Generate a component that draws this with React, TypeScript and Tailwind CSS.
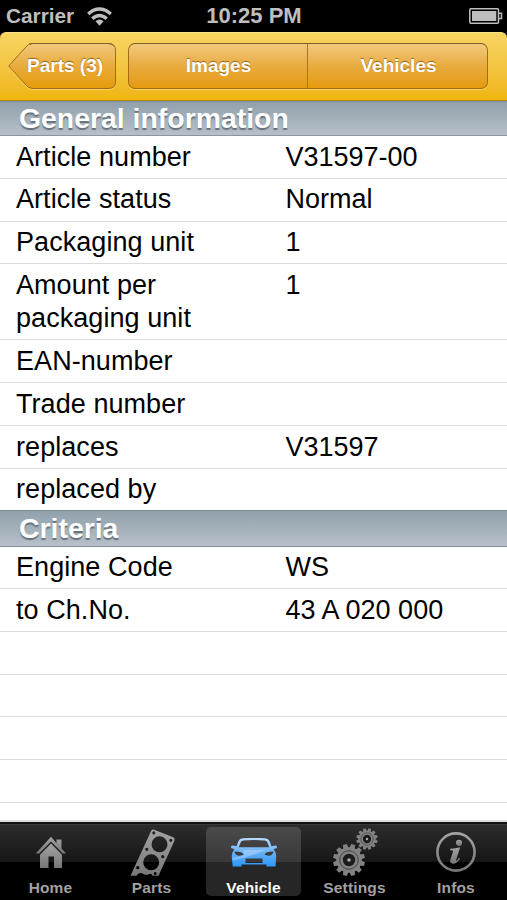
import type { ReactNode } from "react";

type Row = { label: ReactNode; value?: string; height: string };

const general: Row[] = [
  { label: "Article number", value: "V31597-00", height: "h-[43px] pt-[5px]" },
  { label: "Article status", value: "Normal", height: "h-[43px] pt-1" },
  { label: "Packaging unit", value: "1", height: "h-[42px] pt-1" },
  { label: <>Amount per<br />packaging unit</>, value: "1", height: "h-[76px] pt-[5px]" },
  { label: "EAN-number", height: "h-[43px] pt-[5px]" },
  { label: "Trade number", height: "h-[43px] pt-[5px]" },
  { label: "replaces", value: "V31597", height: "h-[43px] pt-[5px]" },
  { label: "replaced by", height: "h-[41px] border-b-0 pt-1" },
];

const criteria: Row[] = [
  { label: "Engine Code", value: "WS", height: "h-[42px] pt-1" },
  { label: "to Ch.No.", value: "43 A 020 000", height: "h-[43px] pt-[5px]" },
  { label: "", height: "h-[43px]" },
  { label: "", height: "h-[42px]" },
  { label: "", height: "h-[43px]" },
  { label: "", height: "h-[43px]" },
];

function SectionHeader({ title, className }: { title: string; className: string }) {
  return (
    <div className={`${className} shrink-0 border-t border-b border-t-[#7d8f98] border-b-[#89959f] bg-linear-to-b from-[#91a1ac] to-[#b7c0c9] pl-[19px] text-[28.4px] font-bold text-white [text-shadow:0_1.5px_1px_#66717b]`}>
      {title}
    </div>
  );
}

function Rows({ rows }: { rows: Row[] }) {
  return (
    <>
      {rows.map((row, i) => (
        <div key={i} className={`flex shrink-0 border-b border-[#dcdcdc] pl-4 text-[27px] leading-[33px] text-black ${row.height}`}>
          <div className="w-[269.5px] shrink-0 tracking-[0.06px]">{row.label}</div>
          <div>{row.value}</div>
        </div>
      ))}
    </>
  );
}

function HomeIcon() {
  return (
    <svg width="32" height="34" viewBox="0 0 32 34" fill="url(#steel)">
      <path d="M16 .8 .8 17.500H4.200L16 5.400 27.800 17.500H31.200L26.500 12.500V3.500h-5v3.700z" />
      <path d="M16 7.600 5 18.800V32h8.500V20.500h5.500V32H27V18.800z" />
    </svg>
  );
}

function GasketIcon() {
  return (
    <svg width="48" height="50" viewBox="0 0 48 50" fill="url(#steel)" fillRule="evenodd">
      <path d="M22.200 1.800Q23.200 0 25.200 .7L44.300 8.300Q46.200 9.500 45.500 11.800L29.500 46.700H23.500Q22.500 44 19.800 45.200Q16.500 46.800 13.500 44.500Q9.500 43 7.500 46.700H1.500zM22.500 15.300a8 8 0 1 0 16 0a8 8 0 1 0-16 0zM14.200 33.300a8 8 0 1 0 16 0a8 8 0 1 0-16 0zM23.200 3.900a1.600 1.600 0 1 0 3.200 0a1.600 1.600 0 1 0-3.200 0zM40.200 11.300a1.600 1.600 0 1 0 3.200 0a1.600 1.600 0 1 0-3.200 0zM16.200 20.300a1.600 1.600 0 1 0 3.200 0a1.600 1.600 0 1 0-3.200 0zM32.200 27.700a1.600 1.600 0 1 0 3.200 0a1.600 1.600 0 1 0-3.200 0zM7.200 38.700a1.600 1.600 0 1 0 3.200 0a1.600 1.600 0 1 0-3.200 0zM24.700 44.600a1.500 1.500 0 1 0 3 0a1.500 1.500 0 1 0-3 0z" />
    </svg>
  );
}

function CarIcon() {
  return (
    <svg width="48" height="32" viewBox="0 0 48 32">
      <path fill="url(#sky)" fillRule="evenodd" d="M8.500 3Q9.500 .5 13 .3Q24-.5 35 .3Q38.500 .5 39.500 3L41.500 8.200 45.500 7.500Q48 8.200 46.500 10.200L43.600 11Q46.500 15 46.200 19L45.500 28.500H36.500V26.500H11.500V28.500H2.700L1.800 19Q1.500 15 4.400 11L1.500 10.200Q0 8.200 2.500 7.500L6.500 8.200zM11 3.800 8.700 9.300H39.300L37 3.800Q36.500 2.600 34.500 2.400Q24 1.600 13.500 2.400Q11.500 2.600 11 3.800zM4.500 13.500Q5 17.500 9.500 17.800L13.500 16.800Q12.500 13.500 4.500 13.500zM43.500 13.500Q43 17.500 38.500 17.800L34.500 16.800Q35.500 13.500 43.500 13.500zM15.500 20.500V25H32.500V20.500z" />
      <path fill="#fff" opacity=".28" d="M13 12H36L15.500 19.500 2.500 22.500V19.500L10 18.500 14.500 17z" />
    </svg>
  );
}

function Gear({ cx, cy, s }: { cx: number; cy: number; s: number }) {
  return (
    <g transform={`translate(${cx} ${cy}) scale(${s})`} fill="#828282">
      {[15, 45, 75, 105, 135, 165, 195, 225, 255, 285, 315, 345].map((a) => (
        <path key={a} transform={`rotate(${a})`} d="M-2.800-11-2-16H2L2.800-11z" />
      ))}
      <circle r="12.800" fill="#828282" />
      <circle r="9.300" fill="none" stroke="#434343" strokeWidth="1" />
      <circle r="6.200" fill="#1b1b1b" />
      <circle r="1.800" fill="#aaa" />
    </g>
  );
}

function GearsIcon() {
  return (
    <svg width="48" height="50" viewBox="0 0 48 50">
      <Gear cx={18} cy={32} s={1} />
      <Gear cx={36} cy={11} s={0.67} />
    </svg>
  );
}

function InfoIcon() {
  return (
    <svg width="42" height="42" viewBox="0 0 42 42" fill="url(#steel)">
      <circle cx="21" cy="21" r="18.600" fill="none" stroke="url(#steel)" strokeWidth="2.600" />
      <circle cx="24" cy="11.800" r="3.100" />
      <path d="M15.300 17.800Q20 17.200 25.200 16.200L21.300 28.200Q20.800 30 21.600 29.800Q22.500 29.300 24 26.800L25 27.400Q22 32.700 18 32.700Q14.300 32.300 15.400 28.500L18 20.600Q18.500 19.100 15 19.200z" />
    </svg>
  );
}

const tabs = [
  { name: "Home", icon: <HomeIcon />, pad: "pt-[9px]" },
  { name: "Parts", icon: <GasketIcon />, pad: "pt-[2px] pl-[3px]" },
  { name: "Vehicle", icon: <CarIcon />, pad: "pt-[11px]", active: true },
  { name: "Settings", icon: <GearsIcon />, pad: "pt-[1px]" },
  { name: "Infos", icon: <InfoIcon />, pad: "pt-[4px]" },
];

const buttonFill = "border border-[#a66b15] border-t-[#806022] bg-linear-to-b from-[#f1c97d] via-[#e9ab3c] to-[#e59b08] shadow-[0_1px_0_#f8d45d]";

export default function App() {
  return (
    <div className="flex h-[900px] w-[507px] flex-col overflow-hidden bg-white font-['Liberation_Sans',Arial,sans-serif]">
      <svg width="0" height="0" className="absolute">
        <defs>
          <linearGradient id="steel" x1="0" y1="0" x2="0" y2="1"><stop stopColor="#a3a3a3" /><stop offset="1" stopColor="#777" /></linearGradient>
          <linearGradient id="sky" x1="0" y1="0" x2="0" y2="1"><stop stopColor="#b9ddfc" /><stop offset=".5" stopColor="#67b0f6" /><stop offset="1" stopColor="#2a97fb" /></linearGradient>
        </defs>
      </svg>

      <header className="shrink-0 bg-black">
        <div className="grid h-8 grid-cols-3 items-center px-[6px] text-[#bebebe]">
          <div className="flex items-center gap-[13px]">
            <span className="text-[20.800px] leading-8 font-bold">Carrier</span>
            <svg width="25" height="19" viewBox="0 0 25 19" fill="none" stroke="#bebebe" strokeWidth="3.400">
              <path d="M1.200 7Q12.500-2.800 23.800 7M5.300 11.700Q12.500 5.200 19.700 11.700" />
              <path fill="#bebebe" stroke="none" d="M8.500 14.200Q12.500 11 16.500 14.200L12.500 18.800z" />
            </svg>
          </div>
          <span className="pl-px text-center text-[22px] leading-8 font-bold whitespace-nowrap">10:25 PM</span>
          <svg className="-mr-[2px] justify-self-end" width="34" height="16" viewBox="0 0 34 16" fill="none" stroke="#bebebe" strokeWidth="1.500">
            <rect x=".8" y=".8" width="28.700" height="14.400" rx="1" />
            <rect x="3" y="3" width="24.300" height="10" fill="#bebebe" stroke="none" />
            <path d="M30 5.300h2.500v5.200H30" />
          </svg>
        </div>
        <nav className="flex h-[69px] rounded-t-[6px] border-t border-b border-t-[#fbe08a] border-b-[#b78a0c] bg-linear-to-b from-[#f7d561] to-[#efb507] pt-[10px] pr-[19px] pl-[8px] text-[19px] leading-[44px] font-bold text-white [text-shadow:0_-1px_1px_#94671d]">
          <div className="relative h-[47px] w-[108px]">
            <svg className="absolute inset-0" width="108" height="47" viewBox="0 0 108 47">
              <defs><linearGradient id="amber" x1="0" y1="0" x2="0" y2="1"><stop stopColor="#f1c97d" /><stop offset=".5" stopColor="#e9ab3c" /><stop offset="1" stopColor="#e59b08" /></linearGradient></defs>
              <path d="M25 1.500H100Q107.500 1.500 107.500 8V40Q107.500 46.500 100 46.500H25Q20 46.500 17 42L.7 24 17 6Q20 1.500 25 1.500z" fill="none" stroke="#f8d45d" />
              <path d="M25 .5H100Q107.500 .5 107.500 7V39Q107.500 45.500 100 45.500H25Q20 45.500 17 41L.7 23 17 5Q20 .5 25 .5z" fill="url(#amber)" stroke="#9d6b20" />
              <path d="M21 1Q23 .5 25 .5H100Q104 .5 106 3" fill="none" stroke="#806022" />
            </svg>
            <span className="relative block pt-px pl-[19px]">Parts (3)</span>
          </div>
          <div className={`ml-[12px] grid h-[46px] w-[360px] grid-cols-2 rounded-[7px] text-center ${buttonFill}`}>
            <span className="border-r border-[#aa7423] pl-px">Images</span>
            <span className="pl-[2px]">Vehicles</span>
          </div>
        </nav>
      </header>

      <main className="flex h-[721px] shrink-0 flex-col overflow-hidden">
        <SectionHeader title="General information" className="h-[35px] leading-[33px]" />
        <Rows rows={general} />
        <SectionHeader title="Criteria" className="h-[37px] leading-[35px]" />
        <Rows rows={criteria} />
        <div className="flex-1" />
        <div className="h-[2px] shrink-0 bg-[#dddddd]" />
      </main>

      <footer className="grid h-[78px] shrink-0 grid-cols-[101px_101px_102px_101px_102px] border-t-2 border-[#111] bg-[linear-gradient(#434343_0,#2c2c2c_1px,#161616_38px,#000_38px)]">
        {tabs.map((tab) => (
          <div key={tab.name} className={`mt-[3px] flex h-[69px] flex-col items-center rounded-[5px] ${tab.active ? "mr-[3px] ml-[4px] bg-white/15 text-white" : "text-[#a1a1a1]"}`}>
            <div className={`h-[52px] shrink-0 ${tab.pad}`}>{tab.icon}</div>
            <div className="text-[15.500px] leading-[17px] font-bold tracking-[0.15px]">{tab.name}</div>
          </div>
        ))}
      </footer>
    </div>
  );
}
